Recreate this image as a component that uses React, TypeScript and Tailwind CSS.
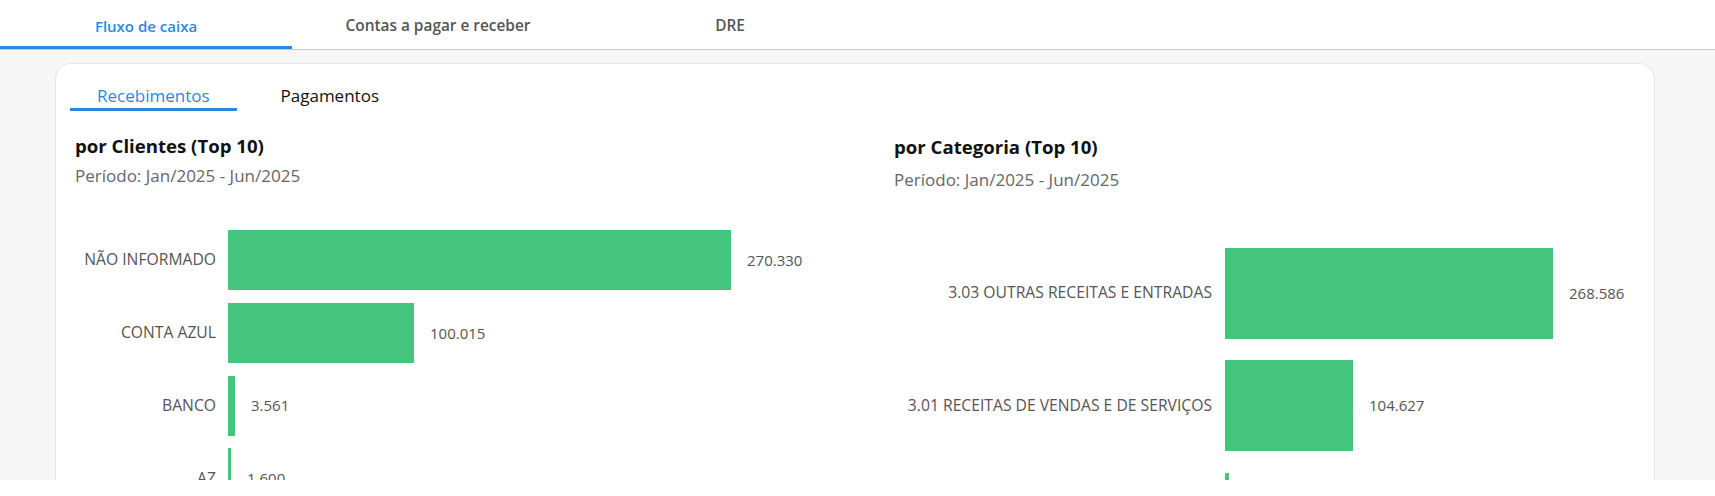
import React from 'react';

type Row = { label: string; value: number };

const clientes: Row[] = [
  { label: 'NÃO INFORMADO', value: 270330 },
  { label: 'CONTA AZUL', value: 100015 },
  { label: 'BANCO', value: 3561 },
  { label: 'AZ', value: 1600 },
  { label: 'OUTROS', value: 820 },
];

const categorias: Row[] = [
  { label: '3.03 OUTRAS RECEITAS E ENTRADAS', value: 268586 },
  { label: '3.01 RECEITAS DE VENDAS E DE SERVIÇOS', value: 104627 },
  { label: '3.02 RECEITAS FINANCEIRAS', value: 3250 },
];

const fmt = (n: number) => n.toLocaleString('pt-BR');

function BarChart({
  rows,
  labelWidth,
  maxWidth,
  rowHeight,
  barHeight,
  gap,
}: {
  rows: Row[];
  labelWidth: number;
  maxWidth: number;
  rowHeight: number;
  barHeight: number;
  gap: number;
}) {
  const max = Math.max(...rows.map((r) => r.value));
  return (
    <div className="flex flex-col">
      {rows.map((r) => (
        <div key={r.label} className="flex shrink-0 items-center" style={{ height: rowHeight }}>
          <div
            className="shrink-0 whitespace-nowrap text-right text-[15.7px] leading-none text-[#555]"
            style={{ width: labelWidth, marginRight: gap }}
          >
            {r.label}
          </div>
          <div
            className="shrink-0 bg-[#45c47e]"
            style={{ width: Math.max(2, Math.round((r.value / max) * maxWidth)), height: barHeight }}
          />
          <div className="ml-[16px] text-[15px] leading-none text-[#555]">{fmt(r.value)}</div>
        </div>
      ))}
    </div>
  );
}

export default function App() {
  const tabs = ['Fluxo de caixa', 'Contas a pagar e receber', 'DRE'];
  return (
    <div className="h-[496px] bg-white" style={{ fontFamily: '"Open Sans", "Noto Sans", sans-serif' }}>
      <div className="flex h-[480px] flex-col overflow-hidden bg-[#f7f7f7]">
        <div className="flex shrink-0 border-b border-[#c9c9c9] bg-white">
          {tabs.map((t, i) => (
            <div
              key={t}
              className={
                i === 0
                  ? 'flex h-[49px] w-[292px] items-center justify-center border-b-[3px] border-[#2a88e4] pt-[6px] text-[15px] font-semibold text-[#2a88e4]'
                  : 'flex h-[49px] w-[292px] items-center justify-center border-b-[3px] border-transparent pt-[6px] text-[15.4px] font-semibold text-[#555]'
              }
            >
              {t}
            </div>
          ))}
        </div>

        <div className="ml-[55px] mt-[13px] w-[1600px] flex-1 rounded-t-[16px] border border-b-0 border-[#e6e6e6] bg-white pt-[15px]">
          <div className="ml-[14px] flex gap-[17px]">
            <div className="flex h-[32px] items-center border-b-[3px] border-[#2a88e4] px-[27px] pt-[5px] text-[17px] text-[#2a88e4]">
              Recebimentos
            </div>
            <div className="flex h-[32px] items-center border-b-[3px] border-transparent px-[27px] pt-[5px] text-[17px] text-[#111]">
              Pagamentos
            </div>
          </div>

          <div className="flex">
            <div className="w-[838px] shrink-0 pl-[19px]">
              <div className="mt-[23px] text-[18.6px] font-bold leading-[24px] text-[#111]">por Clientes (Top 10)</div>
              <div className="mt-[7px] text-[17px] leading-[22px] text-[#666]">Período: Jan/2025 - Jun/2025</div>
              <div className="mt-[37px]">
                <BarChart rows={clientes} labelWidth={141} maxWidth={503} rowHeight={72.7} barHeight={60} gap={12} />
              </div>
            </div>
            <div className="flex-1">
              <div className="mt-[24px] text-[18.6px] font-bold leading-[24px] text-[#111]">por Categoria (Top 10)</div>
              <div className="mt-[10px] text-[17px] leading-[22px] text-[#666]">Período: Jan/2025 - Jun/2025</div>
              <div className="mt-[46px]">
                <BarChart rows={categorias} labelWidth={318} maxWidth={328} rowHeight={112.5} barHeight={91} gap={13} />
              </div>
            </div>
          </div>
        </div>
      </div>
    </div>
  );
}
